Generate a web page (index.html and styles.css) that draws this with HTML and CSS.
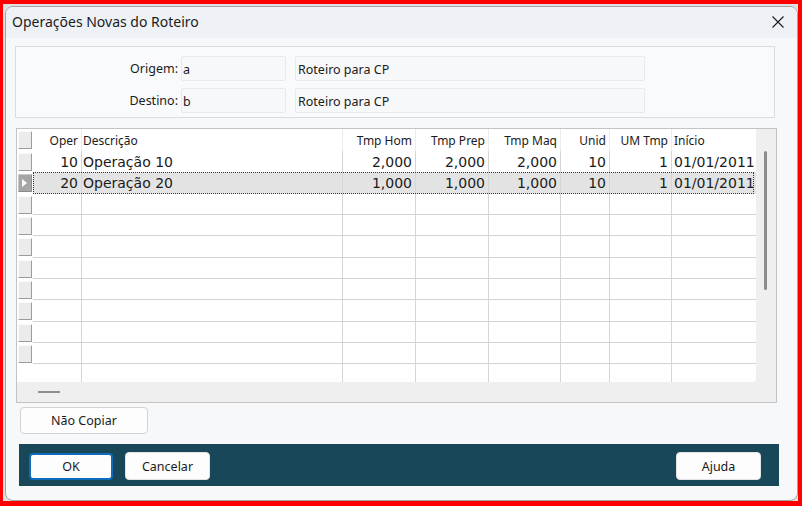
FILE: index.html
```html
<!DOCTYPE html>
<html lang="pt">
<head>
  <meta charset="UTF-8" />
  <title>Operações Novas do Roteiro</title>
  <link rel="stylesheet" href="styles.css">
</head>
<body>
<div class="frame">
  <div class="window">
    <div class="titleBar">
      <span class="title">Operações Novas do Roteiro</span>
      <svg class="closeIcon" width="12" height="12" viewBox="0 0 12 12">
        <path d="M0.5 0.5 L11.5 11.5 M11.5 0.5 L0.5 11.5" stroke="#1a1a1a" stroke-width="1.1" fill="none" />
      </svg>
    </div>

    <div class="headerPanel">
      <div class="fieldRow">
        <span class="fieldLabel">Origem:</span>
        <div class="field code">a</div>
        <div class="field desc">Roteiro para CP</div>
      </div>
      <div class="fieldRow">
        <span class="fieldLabel">Destino:</span>
        <div class="field code">b</div>
        <div class="field desc">Roteiro para CP</div>
      </div>
    </div>

    <div class="grid">
      <div class="gridBody">
        <div class="row head">
          <div class="ind"><span class="indBtn"></span></div>
          <div class="cell c-oper num">Oper</div>
          <div class="cell c-desc">Descrição</div>
          <div class="cell c-hom num">Tmp Hom</div>
          <div class="cell c-prep num">Tmp Prep</div>
          <div class="cell c-maq num">Tmp Maq</div>
          <div class="cell c-unid num">Unid</div>
          <div class="cell c-um num">UM Tmp</div>
          <div class="cell c-ini">Início</div>
        </div>
        <div class="row data">
          <div class="ind"><span class="indBtn"></span></div>
          <div class="cell c-oper num">10</div>
          <div class="cell c-desc">Operação 10</div>
          <div class="cell c-hom num">2,000</div>
          <div class="cell c-prep num">2,000</div>
          <div class="cell c-maq num">2,000</div>
          <div class="cell c-unid num">10</div>
          <div class="cell c-um num">1</div>
          <div class="cell c-ini">01/01/2011</div>
        </div>
        <div class="row data sel">
          <div class="ind"><span class="indBtn current"></span></div>
          <div class="cell c-oper num">20</div>
          <div class="cell c-desc">Operação 20</div>
          <div class="cell c-hom num">1,000</div>
          <div class="cell c-prep num">1,000</div>
          <div class="cell c-maq num">1,000</div>
          <div class="cell c-unid num">10</div>
          <div class="cell c-um num">1</div>
          <div class="cell c-ini">01/01/2011</div>
        </div>
        <div class="row empty"><div class="ind"><span class="indBtn"></span></div><div class="cell c-oper"></div><div class="cell c-desc"></div><div class="cell c-hom"></div><div class="cell c-prep"></div><div class="cell c-maq"></div><div class="cell c-unid"></div><div class="cell c-um"></div><div class="cell c-ini"></div></div>
        <div class="row empty"><div class="ind"><span class="indBtn"></span></div><div class="cell c-oper"></div><div class="cell c-desc"></div><div class="cell c-hom"></div><div class="cell c-prep"></div><div class="cell c-maq"></div><div class="cell c-unid"></div><div class="cell c-um"></div><div class="cell c-ini"></div></div>
        <div class="row empty"><div class="ind"><span class="indBtn"></span></div><div class="cell c-oper"></div><div class="cell c-desc"></div><div class="cell c-hom"></div><div class="cell c-prep"></div><div class="cell c-maq"></div><div class="cell c-unid"></div><div class="cell c-um"></div><div class="cell c-ini"></div></div>
        <div class="row empty"><div class="ind"><span class="indBtn"></span></div><div class="cell c-oper"></div><div class="cell c-desc"></div><div class="cell c-hom"></div><div class="cell c-prep"></div><div class="cell c-maq"></div><div class="cell c-unid"></div><div class="cell c-um"></div><div class="cell c-ini"></div></div>
        <div class="row empty"><div class="ind"><span class="indBtn"></span></div><div class="cell c-oper"></div><div class="cell c-desc"></div><div class="cell c-hom"></div><div class="cell c-prep"></div><div class="cell c-maq"></div><div class="cell c-unid"></div><div class="cell c-um"></div><div class="cell c-ini"></div></div>
        <div class="row empty"><div class="ind"><span class="indBtn"></span></div><div class="cell c-oper"></div><div class="cell c-desc"></div><div class="cell c-hom"></div><div class="cell c-prep"></div><div class="cell c-maq"></div><div class="cell c-unid"></div><div class="cell c-um"></div><div class="cell c-ini"></div></div>
        <div class="row empty"><div class="ind"><span class="indBtn"></span></div><div class="cell c-oper"></div><div class="cell c-desc"></div><div class="cell c-hom"></div><div class="cell c-prep"></div><div class="cell c-maq"></div><div class="cell c-unid"></div><div class="cell c-um"></div><div class="cell c-ini"></div></div>
        <div class="row empty"><div class="ind"><span class="indBtn"></span></div><div class="cell c-oper"></div><div class="cell c-desc"></div><div class="cell c-hom"></div><div class="cell c-prep"></div><div class="cell c-maq"></div><div class="cell c-unid"></div><div class="cell c-um"></div><div class="cell c-ini"></div></div>
        <div class="row tail"><div class="ind"></div><div class="cell c-oper"></div><div class="cell c-desc"></div><div class="cell c-hom"></div><div class="cell c-prep"></div><div class="cell c-maq"></div><div class="cell c-unid"></div><div class="cell c-um"></div><div class="cell c-ini"></div></div>
      </div>
      <div class="vScroll"><span class="thumb"></span></div>
      <div class="hScroll"><span class="thumb"></span></div>
      <div class="corner"></div>
    </div>

    <button class="plainBtn copyBtn">Não Copiar</button>

    <div class="bottomBar">
      <button class="plainBtn barBtn okBtn">OK</button>
      <button class="plainBtn barBtn">Cancelar</button>
      <span class="spacer"></span>
      <button class="plainBtn barBtn">Ajuda</button>
    </div>
  </div>
</div>
</body>
</html>
```

FILE: styles.css
```css
* { margin: 0; padding: 0; box-sizing: border-box; }
html, body {
  width: 802px;
  height: 506px;
  overflow: hidden;
  font-family: "Noto Sans", "Open Sans", sans-serif;
  color: #1b1b1b;
}
.frame {
  width: 802px;
  height: 506px;
  border-style: solid;
  border-color: #ff0000;
  border-width: 4px 4px 5px 3px;
  padding: 2px 0 0 2px;
  background-color: #dde1e4;
}
.window {
  width: 793px;
  height: 495px;
  display: flex;
  flex-direction: column;
  background-color: #f7f8fa;
  border: 1px solid #a3a3a3;
  border-radius: 8px;
  overflow: hidden;
}
.titleBar {
  flex: none;
  height: 31px;
  display: flex;
  align-items: center;
  justify-content: space-between;
  padding: 0 13px 2px 6px;
  background-color: #eef2f6;
}
.title {
  font-size: 14px;
  line-height: 20px;
}
.closeIcon { display: block; margin-top: 1px; }

/* origem / destino */
.headerPanel {
  flex: none;
  width: 760px;
  height: 72px;
  margin: 8px 0 0 9px;
  padding-top: 9px;
  display: flex;
  flex-direction: column;
  gap: 7px;
  background-color: #f9fafb;
  border: 1px solid #dcdcdc;
}
.fieldRow {
  display: flex;
  align-items: center;
  height: 25px;
  font-size: 12.5px;
}
.fieldLabel {
  width: 162px;
  margin-right: 3px;
  text-align: right;
  line-height: 25px;
}
.field {
  height: 25px;
  line-height: 23px;
  padding: 1px 2px 0 1px;
  background-color: #f7f8f9;
  border: 1px solid #e9e9e9;
  border-radius: 2px;
}
.field.code { width: 105px; }
.field.desc { width: 350px; margin-left: 9px; padding-left: 2px; }

/* grade */
.grid {
  flex: none;
  width: 761px;
  height: 275px;
  margin: 10px 0 0 10px;
  display: grid;
  grid-template-columns: 739px 20px;
  grid-template-rows: 253px 20px;
  border: 1px solid #c3c3c3;
  background-color: #efefef;
}
.gridBody {
  background-color: #fff;
  overflow: hidden;
  border-bottom-right-radius: 3px;
}
.row {
  position: relative;
  display: flex;
  height: 21.333px;
}
.row.head { height: 22px; }
.row.tail { height: 17.67px; }
.ind {
  flex: none;
  width: 16px;
  padding: 2px 0 0 1px;
}
.indBtn {
  display: block;
  width: 14px;
  height: 18px;
  background-color: #ebebeb;
  border: 1px solid;
  border-color: #fafafa #9c9c9c #9c9c9c #fafafa;
  border-radius: 1px;
}
.indBtn.current {
  position: relative;
  background-color: #a6a6a6;
  border-color: #c8c8c8 #8a8a8a #8a8a8a #c8c8c8;
}
.indBtn.current::after {
  content: "";
  position: absolute;
  left: 3px;
  top: 4px;
  border-left: 5px solid #fff;
  border-top: 4px solid transparent;
  border-bottom: 4px solid transparent;
}
.cell {
  flex: none;
  height: 100%;
  overflow: hidden;
  white-space: nowrap;
  border-right: 1px solid #d5d5d5;
  font-family: "DejaVu Sans", Verdana, sans-serif;
  font-size: 14px;
  line-height: 21px;
  padding: 1px 3px 0 1px;
}
.cell.num { text-align: right; }
.c-oper { width: 49px; }
.c-desc { width: 261px; }
.c-hom { width: 73px; }
.c-prep { width: 73px; }
.c-maq { width: 72px; }
.c-unid { width: 49px; }
.c-um { width: 62px; }
.c-ini { width: 84px; border-right: none; padding-left: 2px; }

.row.head .cell {
  font-family: "Noto Sans", "Open Sans", sans-serif;
  font-size: 12px;
  line-height: 22px;
  padding-top: 1px;
  border-right-color: #ececec;
}
.row.empty .cell { border-bottom: 1px solid #d3d3d3; }
.row.sel .cell { background-color: #e3e3e3; }
.row.sel::after {
  content: "";
  position: absolute;
  left: 16px;
  right: 2px;
  top: 0;
  bottom: 0;
  border: 1px dotted #3a3a3a;
  pointer-events: none;
}

.vScroll {
  padding: 22px 0 0 8px;
}
.vScroll .thumb {
  display: block;
  width: 3px;
  height: 139px;
  border-radius: 2px;
  background-color: #8d8d8d;
}
.hScroll {
  padding: 9px 0 0 21px;
}
.hScroll .thumb {
  display: block;
  width: 22px;
  height: 2px;
  background-color: #8d8d8d;
}

/* botoes */
.plainBtn {
  font-family: "Noto Sans", "Open Sans", sans-serif;
  font-size: 12.5px;
  color: #1b1b1b;
  background-color: #fdfdfd;
  border: 1px solid #d2d2d2;
  border-radius: 4px;
  cursor: pointer;
}
.copyBtn {
  flex: none;
  align-self: flex-start;
  width: 128px;
  height: 27px;
  margin: 4px 0 0 14px;
}
.bottomBar {
  flex: none;
  width: 760px;
  height: 42px;
  margin: 10px 0 0 13px;
  padding: 8px 18px 0 10px;
  display: flex;
  align-items: flex-start;
  gap: 12px;
  background-color: #19475a;
}
.barBtn {
  width: 85px;
  height: 28px;
  border-color: #e3e3e3;
}
.okBtn {
  width: 84px;
  margin-top: 1px;
  height: 27px;
  border: 2px solid #0f6cbd;
  border-radius: 4px;
}
.spacer { flex: 1; }
```
